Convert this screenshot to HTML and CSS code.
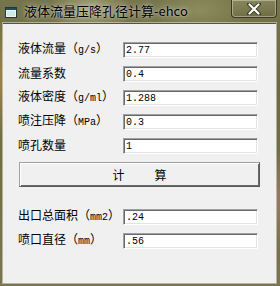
FILE: index.html
```html
<!DOCTYPE html>
<html lang="zh-CN">
<head>
  <meta charset="UTF-8">
  <title>液体流量压降孔径计算-ehco</title>
  <link rel="stylesheet" href="styles.css">
</head>
<body>
<div class="window">
  <div class="titlebar">
    <!--程序图标-->
    <svg class="app-icon" width="12" height="11" viewBox="0 0 12 11">
      <rect x="0.5" y="0.5" width="11" height="10" fill="#eef6f6" stroke="#1d3a3a"/>
      <rect x="1" y="1" width="10" height="2" fill="#1f4e5a"/>
      <rect x="2" y="4" width="8" height="5" fill="#cfe9e6"/>
    </svg>
    <span class="title">液体流量压降孔径计算-ehco</span>
    <div class="close">
      <svg width="14" height="12" viewBox="0 0 14 12">
        <path d="M2 1 L12 11 M12 1 L2 11" stroke="#3b3b22" stroke-width="4" stroke-linecap="round"/>
        <path d="M2.5 1.5 L11.5 10.5 M11.5 1.5 L2.5 10.5" stroke="#fff" stroke-width="2.2" stroke-linecap="round"/>
      </svg>
    </div>
  </div>
  <div class="client">
    <div class="row"><span class="label">液体流量（<i>g/s</i>）</span><div class="field">2.77</div></div>
    <div class="row"><span class="label">流量系数</span><div class="field">0.4</div></div>
    <div class="row"><span class="label">液体密度（<i>g/ml</i>）</span><div class="field">1.288</div></div>
    <div class="row"><span class="label">喷注压降（<i>MPa</i>）</span><div class="field">0.3</div></div>
    <div class="row"><span class="label">喷孔数量</span><div class="field">1</div></div>

    <div class="button"><span>计</span><span>算</span></div>

    <div class="result">
      <div class="row"><span class="label">出口总面积（<i>mm2</i>）</span><div class="field">.24</div></div>
      <div class="row"><span class="label">喷口直径（<i>mm</i>）</span><div class="field">.56</div></div>
    </div>
  </div>
</div>
</body>
</html>
```

FILE: styles.css
```css
* {
  margin: 0;
  padding: 0;
}

body {
  width: 280px;
  height: 286px;
  overflow: hidden;
  font-family: "Noto Sans CJK SC", "Liberation Sans", sans-serif;
}

.window {
  width: 280px;
  height: 286px;
  display: flex;
  flex-direction: column;
  background:
    radial-gradient(ellipse 40px 30px at 90px 8px, rgba(200, 200, 160, 0.5), transparent),
    radial-gradient(ellipse 50px 25px at 200px 10px, rgba(170, 170, 120, 0.45), transparent),
    radial-gradient(ellipse 10px 60px at 2px 80px, rgba(190, 150, 90, 0.6), transparent),
    radial-gradient(ellipse 10px 50px at 278px 200px, rgba(190, 130, 120, 0.5), transparent),
    linear-gradient(#76744a, #6c6b3f 30%, #7a7550);
}

.titlebar {
  height: 22px;
  display: flex;
  align-items: flex-start;
}

.app-icon {
  margin: 7px 0 0 5px;
}

.title {
  margin: 3px 0 0 7px;
  font-size: 13px;
  line-height: 16px;
  color: #000;
  text-shadow: 0 0 6px rgba(255, 255, 255, 0.7), 0 0 2px rgba(255, 255, 255, 0.5);
}

.close {
  margin-left: auto;
  margin-right: 3px;
  width: 44px;
  height: 17px;
  border: 1px solid rgba(40, 40, 20, 0.8);
  border-top: none;
  border-radius: 0 0 4px 4px;
  box-shadow: inset 0 0 0 1px rgba(255, 255, 255, 0.35);
  background: linear-gradient(rgba(150, 150, 110, 0.5), rgba(100, 100, 60, 0.4));
  display: flex;
  justify-content: center;
  align-items: center;
}

.client {
  flex: 1;
  margin: 1px 4px 3px 3px;
  padding: 18px 0 0 15px;
  background-color: #f0f0f0;
  box-shadow: 0 0 0 1px rgba(255, 255, 255, 0.45);
  border-top: 1px solid #55553a;
}

.row {
  display: flex;
  align-items: center;
  height: 16px;
  margin-bottom: 8px;
}

.label {
  width: 105px;
  flex: none;
  font-size: 12px;
  line-height: 14px;
  margin-top: -2px;
  color: #000;
  white-space: nowrap;
}

/* 半角字符 */
.label i {
  font-style: normal;
  font-family: "Liberation Mono", monospace;
  font-size: 10px;
}

.field {
  box-sizing: border-box;
  width: 135px;
  height: 16px;
  padding: 2px 0 0 2px;
  background-color: #fff;
  border-top: 1px solid #a0a0a0;
  border-left: 1px solid #a0a0a0;
  border-right: 1px solid #fff;
  border-bottom: 1px solid #fff;
  box-shadow: inset 1px 1px 0 #696969, inset -1px -1px 0 #e3e3e3;
  font-family: "Liberation Mono", monospace;
  font-size: 10px;
  line-height: 12px;
  color: #000;
}

.button {
  box-sizing: border-box;
  width: 241px;
  height: 25px;
  margin: 8px 0 0 1px;
  display: flex;
  justify-content: center;
  align-items: center;
  gap: 30px;
  font-size: 12px;
  color: #000;
  border-top: 1px solid #a0a0a0;
  border-left: 1px solid #a0a0a0;
  border-right: 1px solid #5a5a5a;
  border-bottom: 1px solid #5a5a5a;
  box-shadow: inset 1px 1px 0 #fff, inset -1px -1px 0 #6a6a6a;
  background-color: #f0f0f0;
}

.result {
  margin-top: 22px;
}
```
